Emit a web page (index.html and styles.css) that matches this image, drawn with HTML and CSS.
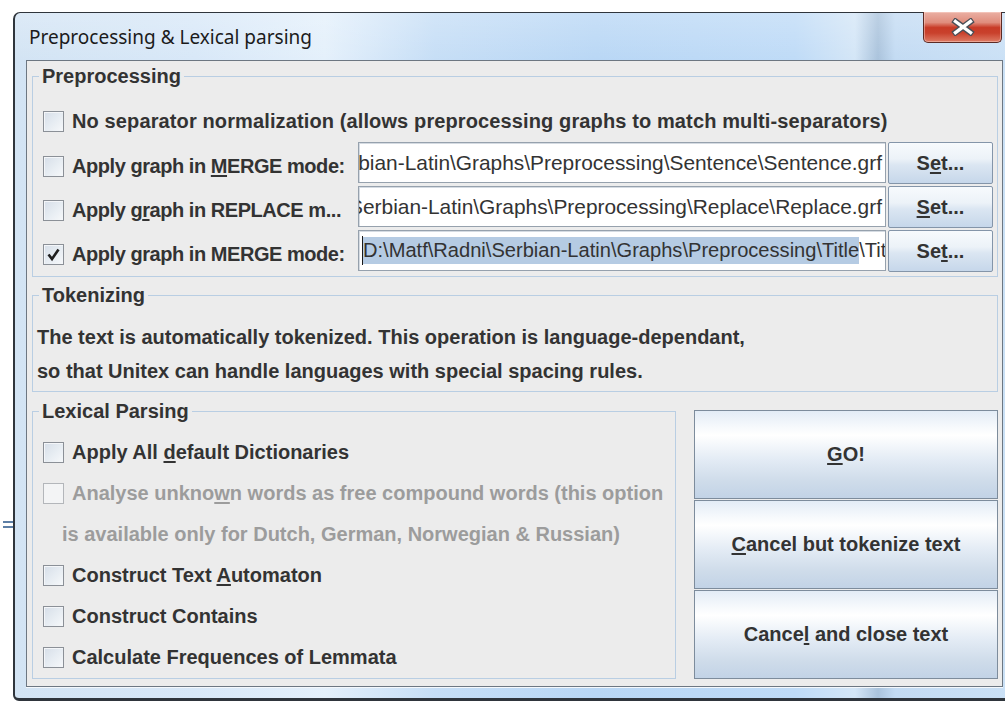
FILE: index.html
```html
<!DOCTYPE html>
<html lang="en">
<head>
<meta charset="utf-8">
<title>Preprocessing &amp; Lexical parsing</title>
<link rel="stylesheet" href="styles.css">
</head>
<body>
<div class="desk-mark"></div>
<div class="window">
  <div class="titlebar">
    <span class="title">Preprocessing &amp; Lexical parsing</span>
    <button class="close" type="button" aria-label="Close">
      <svg width="26" height="18" viewBox="0 0 26 18">
        <path d="M5.5 3.5 L20.5 14.5 M20.5 3.5 L5.5 14.5" stroke="#4a4f57" stroke-width="6" stroke-linecap="square" fill="none"/>
        <path d="M5.5 3.5 L20.5 14.5 M20.5 3.5 L5.5 14.5" stroke="#ffffff" stroke-width="3.4" stroke-linecap="square" fill="none"/>
      </svg>
    </button>
  </div>

  <div class="panel">
    <fieldset class="group pre">
      <legend>Preprocessing</legend>
      <div class="rows">
        <div class="row row-first">
          <span class="cb"></span>
          <span class="lbl">No separator normalization (allows preprocessing graphs to match multi-separators)</span>
        </div>
        <div class="row">
          <div class="opt"><span class="cb"></span><span class="lbl">Apply graph in <u>M</u>ERGE mode:</span></div>
          <div class="field end"><span>D:\Matf\Radni\Serbian-Latin\Graphs\Preprocessing\Sentence\Sentence.grf</span></div>
          <button class="set" type="button">S<u>e</u>t...</button>
        </div>
        <div class="row">
          <div class="opt"><span class="cb"></span><span class="lbl">Apply g<u>r</u>aph in REPLACE m...</span></div>
          <div class="field end"><span>D:\Matf\Radni\Serbian-Latin\Graphs\Preprocessing\Replace\Replace.grf</span></div>
          <button class="set" type="button"><u>S</u>et...</button>
        </div>
        <div class="row">
          <div class="opt"><span class="cb checked"><svg width="19" height="19" viewBox="0 0 19 19"><path d="M4.5 9.5 L8 14 L14.5 4.5" stroke="#1f1f1f" stroke-width="2.6" fill="none"/></svg></span><span class="lbl">Apply graph in MERGE mode:</span></div>
          <div class="field"><i class="caret"></i><span class="sel">D:\Matf\Radni\Serbian-Latin\Graphs\Preprocessing\Title</span><span>\Title.grf</span></div>
          <button class="set" type="button">Se<u>t</u>...</button>
        </div>
      </div>
    </fieldset>

    <fieldset class="group tok">
      <legend>Tokenizing</legend>
      <p class="line">The text is automatically tokenized. This operation is language-dependant,</p>
      <p class="line">so that Unitex can handle languages with special spacing rules.</p>
    </fieldset>

    <div class="bottom">
      <fieldset class="group lex">
        <legend>Lexical Parsing</legend>
        <div class="item"><span class="cb"></span><span class="lbl">Apply All <u>d</u>efault Dictionaries</span></div>
        <div class="item off"><span class="cb"></span><span class="lbl">Analyse unkno<u>w</u>n words as free compound words (this option</span></div>
        <div class="item off cont"><span class="lbl">is available only for Dutch, German, Norwegian &amp; Russian)</span></div>
        <div class="item"><span class="cb"></span><span class="lbl">Construct Text <u>A</u>utomaton</span></div>
        <div class="item"><span class="cb"></span><span class="lbl">Construct Contains</span></div>
        <div class="item"><span class="cb"></span><span class="lbl">Calculate Frequences of Lemmata</span></div>
      </fieldset>

      <div class="actions">
        <button class="big" type="button"><u>G</u>O!</button>
        <button class="big" type="button"><u>C</u>ancel but tokenize text</button>
        <button class="big" type="button">Cance<u>l</u> and close text</button>
      </div>
    </div>
  </div>
</div>
</body>
</html>
```

FILE: styles.css
```css
* {
  box-sizing: border-box;
}

html,
body {
  margin: 0;
}

body {
  position: relative;
  width: 1005px;
  height: 701px;
  overflow: hidden;
  background: #ffffff;
  font-family: "Liberation Sans", Arial, sans-serif;
  color: #333333;
}

/* another window peeking out from behind on the desktop */
.desk-mark {
  position: absolute;
  left: 3px;
  top: 521px;
  width: 12px;
  height: 7px;
  border-top: 2px solid #5d7fa6;
  border-bottom: 2px solid #5d7fa6;
}

/* ---------- window frame ---------- */
.window {
  position: relative;
  margin: 12px 0 0 13px;
  width: 1003px;
  height: 689px;
  display: flex;
  flex-direction: column;
  padding: 0 12px 11px 11px;
  border: 1px solid #2f353c;
  border-left-width: 2px;
  border-bottom-width: 3px;
  border-radius: 7px 7px 0 6px;
  background:
    linear-gradient(180deg, rgba(255, 255, 255, 0.22) 0%, rgba(255, 255, 255, 0) 7%),
    linear-gradient(90deg, #d3e4f4 0%, #d8e8f8 18%, #e4f0fb 31%, #c6def6 42%, #b9d7f5 58%, #bfdbf7 78%, #d4e6f7 84%, #aac3dc 86.3%, #c3dbf3 88%, #cbe1f6 100%);
}

.titlebar {
  height: 47px;
  display: flex;
  align-items: flex-start;
  flex: none;
}

.title {
  margin: 12px 0 0 3px;
  font-family: "Noto Sans", "Open Sans", sans-serif;
  font-size: 19px;
  line-height: 24px;
  color: #1b1b1b;
}

.close {
  margin: -1px 1px 0 auto;
  width: 79px;
  height: 31px;
  padding: 0;
  display: flex;
  align-items: center;
  justify-content: center;
  border: 1px solid #5b2a24;
  border-top: none;
  border-radius: 0 0 5px 5px;
  background: linear-gradient(180deg, #eab0a4 0%, #e08d7d 35%, #c83b27 52%, #c9412c 70%, #de7b65 100%);
  box-shadow: inset 0 0 0 1px rgba(255, 220, 210, 0.45);
}

/* ---------- client area ---------- */
.panel {
  flex: 1;
  display: flex;
  flex-direction: column;
  padding: 5px 4px 6px 5px;
  border: 1px solid #6d7782;
  background: #ececec;
  box-shadow: 0 1px 0 #f4f8fc;
}

.group {
  margin: 0;
  min-width: 0;
  border: 1px solid #b9cee3;
  font-weight: bold;
  font-size: 20px;
}

.group legend {
  padding: 0 3px;
  font-size: 20px;
  line-height: 20px;
  font-weight: bold;
  color: #333333;
}

u {
  text-decoration-thickness: 2px;
  text-underline-offset: 2px;
}

/* checkbox */
.cb {
  flex: none;
  width: 21px;
  height: 21px;
  border: 1px solid #8b9097;
  background: linear-gradient(135deg, #d6dee8 0%, #e6ecf2 50%, #f6f8fa 100%);
  box-shadow: inset 1px 1px 0 #f4f6f9;
  display: flex;
  align-items: center;
  justify-content: center;
}

.lbl {
  white-space: nowrap;
}

/* ---------- preprocessing ---------- */
.pre {
  padding: 12px 4px 4px 10px;
}

.pre legend {
  margin-left: -4px;
}

.rows {
  display: flex;
  flex-direction: column;
  gap: 2px;
}

.row {
  height: 42px;
  display: flex;
  align-items: center;
}

.row-first {
  gap: 8px;
  padding-top: 4px;
}

.row-first .lbl {
  letter-spacing: 0.12px;
}

.opt {
  align-self: flex-start;
  margin-top: 13px;
  width: 315px;
  flex: none;
  display: flex;
  align-items: center;
  gap: 8px;
}

.opt .lbl {
  letter-spacing: -0.45px;
}

.field {
  align-self: flex-start;
  flex: 1;
  min-width: 0;
  height: 41px;
  display: flex;
  align-items: center;
  overflow: hidden;
  padding: 0 3px;
  border: 1px solid #96a1ad;
  box-shadow: inset 1px 1px 0 #d5dbe2;
  background: #ffffff;
  font-weight: normal;
  font-size: 20.1px;
  color: #333333;
  white-space: nowrap;
}

/* long paths scrolled so their tail is visible */
.field.end {
  justify-content: flex-end;
  font-size: 20.9px;
}

.field span {
  flex: none;
}

.caret {
  flex: none;
  width: 1px;
  height: 29px;
  background: #1a1a1a;
}

.sel {
  background: #b5cbe3;
  line-height: 27px;
}

.set {
  flex: none;
  margin-left: 2px;
  width: 105px;
  height: 42px;
  padding: 0;
  border: 1px solid #8495a9;
  border-radius: 2px;
  background: linear-gradient(180deg, #f7fafd 0%, #ecf2f8 40%, #dbe6f2 55%, #c6d7ea 100%);
  font-family: inherit;
  font-weight: bold;
  font-size: 20px;
  color: #333333;
}

/* ---------- tokenizing ---------- */
.tok {
  margin-top: 8px;
  padding: 15px 4px 3px 4px;
}

.tok legend {
  margin-left: 2px;
}

.line {
  margin: 0;
  line-height: 34px;
  white-space: nowrap;
}

/* ---------- lexical parsing + actions ---------- */
.bottom {
  margin-top: 9px;
  display: flex;
  gap: 18px;
}

.lex {
  width: 644px;
  flex: none;
  padding: 11px 4px 0 10px;
}

.lex legend {
  margin-left: -4px;
}

.item {
  height: 41px;
  display: flex;
  align-items: center;
  gap: 8px;
}

.item.off {
  color: #9c9c9c;
}

.item.off .cb {
  border-color: #b3b6ba;
  background: #f3f4f5;
  box-shadow: none;
}

.item.cont {
  padding-left: 19px;
}

.actions {
  margin-top: 9px;
  width: 304px;
  display: flex;
  flex-direction: column;
  gap: 1px;
}

.big {
  height: 89px;
  padding: 0;
  border: 1px solid #7d8c9c;
  background: linear-gradient(180deg, #e3ecf6 0%, #f6f9fc 18%, #ffffff 28%, #e4ecf5 55%, #cfdcea 80%, #c2d3e6 100%);
  font-family: inherit;
  font-weight: bold;
  font-size: 20px;
  color: #333333;
}
```
